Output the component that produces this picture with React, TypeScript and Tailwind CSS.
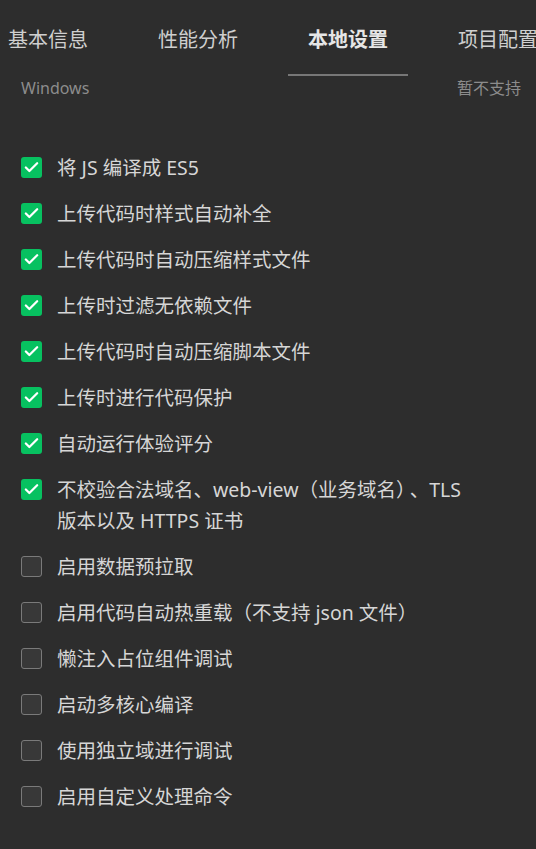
import { Check } from "lucide-react";

// --- Data ---
const tabs = ["基本信息", "性能分析", "本地设置", "项目配置"];
const activeTab = "本地设置";

const options: { label: React.ReactNode; checked: boolean }[] = [
  { label: "将 JS 编译成 ES5", checked: true },
  { label: "上传代码时样式自动补全", checked: true },
  { label: "上传代码时自动压缩样式文件", checked: true },
  { label: "上传时过滤无依赖文件", checked: true },
  { label: "上传代码时自动压缩脚本文件", checked: true },
  { label: "上传时进行代码保护", checked: true },
  { label: "自动运行体验评分", checked: true },
  {
    label: (
      <>
        不校验合法域名、web-view（业务域名）<span className="ml-[4px]">、TLS</span>
        <br />
        版本以及 HTTPS 证书
      </>
    ),
    checked: true,
  },
  { label: "启用数据预拉取", checked: false },
  { label: "启用代码自动热重载（不支持 json 文件）", checked: false },
  { label: "懒注入占位组件调试", checked: false },
  { label: "启动多核心编译", checked: false },
  { label: "使用独立域进行调试", checked: false },
  { label: "启用自定义处理命令", checked: false },
];

function Checkbox({ checked }: { checked: boolean }) {
  return checked ? (
    <span className="flex h-[21px] w-[21px] shrink-0 items-center justify-center rounded-[3px] bg-[#07c160]">
      <Check size={17} strokeWidth={3.2} color="#ffffff" />
    </span>
  ) : (
    <span className="h-[21px] w-[21px] shrink-0 rounded-[3px] border border-[#7a7a7a] bg-[#383838]" />
  );
}

export default function App() {
  return (
    <div
      className="h-[849px] w-[536px] overflow-hidden bg-[#2d2d2d] text-[#d4d4d4]"
      style={{ fontFamily: '"Noto Sans", "Noto Sans CJK SC", sans-serif' }}
    >
      {/* Tabs (last one runs past the right edge, as in the app) */}
      <div className="ml-[-12px] flex gap-[30px] pt-[20px] whitespace-nowrap">
        {tabs.map((t) => {
          const isActive = t === activeTab;
          return (
            <div
              key={t}
              className={`flex h-[56px] w-[120px] shrink-0 justify-center border-b-2 pt-[4px] text-[20px] leading-[32px] ${
                isActive
                  ? "border-[#777777] font-bold text-[#e6e6e6]"
                  : "border-transparent text-[#cfcfcf]"
              }`}
            >
              {t}
            </div>
          );
        })}
      </div>

      {/* Platform row */}
      <div className="flex items-center justify-between pl-[21px] pr-[15px] text-[16px] leading-[24px] text-[#8c8c8c]">
        <span>Windows</span>
        <span>暂不支持</span>
      </div>

      {/* Options */}
      <div className="flex flex-col gap-[15px] pl-[21px] pt-[52px]">
        {options.map((o, i) => (
          <label key={i} className="flex items-start gap-[15px]">
            <span className="flex h-[31px] items-center">
              <Checkbox checked={o.checked} />
            </span>
            <span className="text-[19.5px] leading-[31px] text-[#d6d6d6]">{o.label}</span>
          </label>
        ))}
      </div>
    </div>
  );
}
